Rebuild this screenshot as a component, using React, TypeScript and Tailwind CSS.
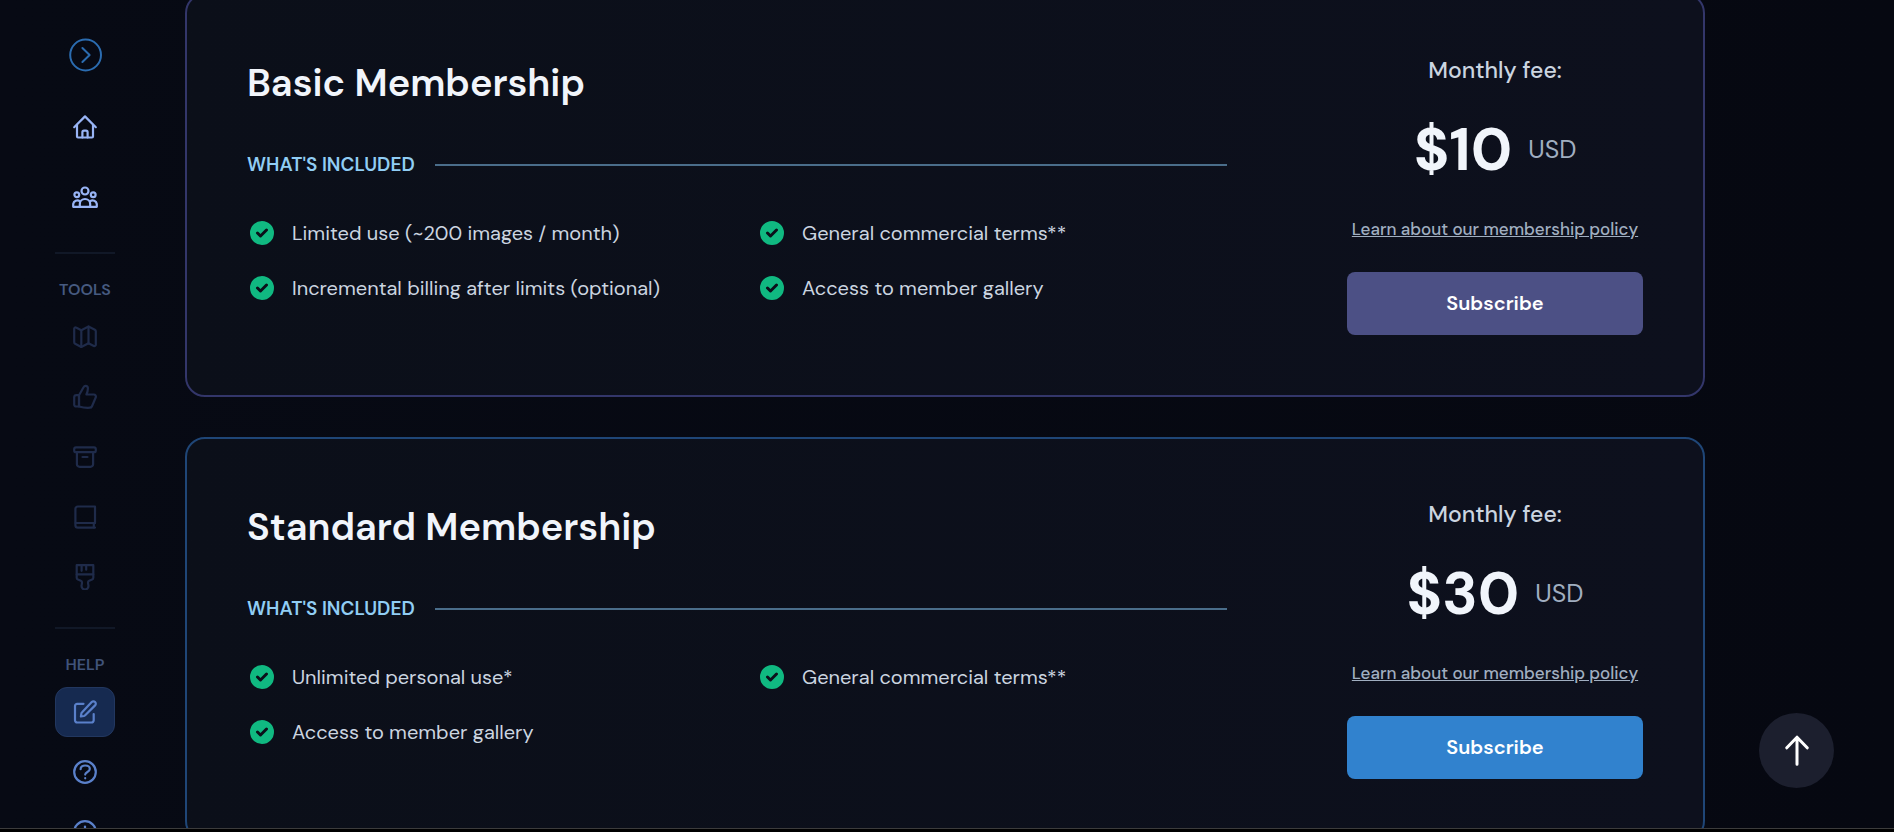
import type { ReactNode } from "react";
import { HiCheckCircle } from "react-icons/hi";

function Icon({ children }: { children: ReactNode }) {
  return (
    <svg
      width="26"
      height="26"
      viewBox="0 0 26 26"
      fill="none"
      stroke="currentColor"
      strokeWidth="2.2"
      strokeLinecap="round"
      strokeLinejoin="round"
      aria-hidden="true"
    >
      {children}
    </svg>
  );
}

const HomeIcon = () => (
  <Icon>
    <path d="M2.2 13.2 13 2.4l10.8 10.8" />
    <path d="M5 10.8v11.7a1 1 0 0 0 1 1h14a1 1 0 0 0 1-1V10.8" />
    <path d="M10.4 23.5v-5.3a1.6 1.6 0 0 1 1.6-1.6h2a1.6 1.6 0 0 1 1.6 1.6v5.3" />
  </Icon>
);

const UsersIcon = () => (
  <Icon>
    <circle cx="13" cy="7" r="3.5" />
    <circle cx="4.8" cy="10.7" r="2.4" />
    <circle cx="21.2" cy="10.7" r="2.4" />
    <path d="M7.8 22.8v-2.6a5.2 5.2 0 0 1 10.4 0v2.6" />
    <path d="M7.8 17.2A4.2 4.2 0 0 0 1.2 20v2.8h23.6V20a4.2 4.2 0 0 0-6.6-2.8" />
  </Icon>
);

const MapIcon = () => (
  <Icon>
    <path d="M9.3 6.2 4 3.6a1.2 1.2 0 0 0-1.8 1.1v13.6c0 .6.3 1.2.9 1.5l6.2 3.1 7.2-3.6 5.3 2.6a1.4 1.4 0 0 0 2-1.2V7.2c0-.6-.3-1.1-.9-1.4l-6.4-3.2z" />
    <path d="M9.3 6.2v16.7M16.5 2.6v16.7" />
  </Icon>
);

const ThumbIcon = () => (
  <Icon>
    <path d="M7 11.2 11.7 3c.4-.8 1-1.2 1.8-1.2 1.3 0 2.4 1 2.4 2.4 0 2.2-.4 4.2-1.5 6.3h7.4c1.5 0 2.5 1.4 2 2.8l-3.8 8.9c-.4.9-1.1 1.5-2.1 1.5-3.8.3-7.4-.2-10.9-1.2z" />
    <path d="M7 11.2v11.3H4a1.8 1.8 0 0 1-1.8-1.8v-7.2c0-1.3 1-2.3 2.3-2.3z" />
  </Icon>
);

const ArchiveIcon = () => (
  <Icon>
    <rect x="2.2" y="3.4" width="21.6" height="4.8" rx="1.8" />
    <path d="M4.9 8.4v11.8a2.6 2.6 0 0 0 2.6 2.6h11a2.6 2.6 0 0 0 2.6-2.6V8.4" />
    <path d="M10.5 13h5" />
  </Icon>
);

const BookIcon = () => (
  <Icon>
    <path d="M23 19V2.5H5.7a2.3 2.3 0 0 0-2.3 2.3v16.4a2.4 2.4 0 0 0 2.4 2.4H23" />
    <path d="M3.6 19H23M21.8 19v4.4" />
  </Icon>
);

const BrushIcon = () => (
  <Icon>
    <path d="M4.7 1.2h16.6v12.6a2 2 0 0 1-1.2 1.8l-2.9 1.2a2 2 0 0 0-1.2 2c0 1.2.5 2 .5 3.2a3.5 3.5 0 0 1-7 0c0-1.2.5-2 .5-3.2a2 2 0 0 0-1.2-2l-2.9-1.2a2 2 0 0 1-1.2-1.8z" />
    <path d="M4.7 10.4h16.6M9.6 1.5v5.3M14.2 1.5v4.2" />
  </Icon>
);

const EditIcon = () => (
  <Icon>
    <path d="M11.5 4.8H5.2A2.2 2.2 0 0 0 3 7v14.3a2.2 2.2 0 0 0 2.2 2.2h14.3a2.2 2.2 0 0 0 2.2-2.2V15" />
    <path d="M19.7 3a2.4 2.4 0 0 1 3.4 3.4L13.2 16.3a2.6 2.6 0 0 1-1.2.7l-3.1.5.5-3.1c.1-.5.4-.9.7-1.2z" />
  </Icon>
);

const HelpIcon = () => (
  <Icon>
    <circle cx="13" cy="13" r="10.8" />
    <path d="M8.6 10.2c0-2.4 2-3.7 4.6-3.7 2.7 0 4.6 1.3 4.6 3.5 0 3-4.6 2.9-4.6 5.6" />
    <path d="M13.2 19.2v.1" />
  </Icon>
);

const InfoIcon = () => (
  <Icon>
    <circle cx="13" cy="13" r="10.8" />
    <path d="M13 7.5v11" />
  </Icon>
);

type NavItem = { label: string; icon: ReactNode };

const tools: NavItem[] = [
  { label: "Explore", icon: <MapIcon /> },
  { label: "Rate", icon: <ThumbIcon /> },
  { label: "Archive", icon: <ArchiveIcon /> },
  { label: "Library", icon: <BookIcon /> },
  { label: "Styles", icon: <BrushIcon /> },
];

function NavLink({ item, tone }: { item: NavItem; tone: string }) {
  return (
    <a
      href="#"
      aria-label={item.label}
      className={`flex h-[50px] w-[60px] shrink-0 items-center justify-center rounded-xl border ${tone}`}
    >
      {item.icon}
    </a>
  );
}

function Sidebar() {
  return (
    <aside className="flex w-[170px] shrink-0 flex-col items-center overflow-hidden pt-[38px]">
      <button type="button" aria-label="Expand menu" className="shrink-0 text-[#2b6cb0]">
        <svg width="34" height="34" viewBox="0 0 34 34" fill="none" stroke="currentColor" strokeWidth="2" strokeLinecap="round" strokeLinejoin="round">
          <circle cx="17.6" cy="17" r="15.4" />
          <path d="M14.4 10l7.2 7-7.2 7" />
        </svg>
      </button>
      <nav className="mt-[30px] flex flex-col items-center gap-5">
        <NavLink item={{ label: "Home", icon: <HomeIcon /> }} tone="border-transparent text-[#98b4f5]" />
        <NavLink item={{ label: "Community", icon: <UsersIcon /> }} tone="border-transparent text-[#98b4f5]" />
      </nav>
      <div className="mt-[30px] h-0.5 w-[60px] shrink-0 bg-[#111827]" />
      <h3 className="mt-[26px] text-[16px] leading-5 font-semibold text-[#465a80]">TOOLS</h3>
      <nav className="mt-3 flex flex-col items-center gap-2.5">
        {tools.map((item) => (
          <NavLink key={item.label} item={item} tone="border-transparent text-[#1f2b4a]" />
        ))}
      </nav>
      <div className="mt-[25px] h-0.5 w-[60px] shrink-0 bg-[#111827]" />
      <h3 className="mt-[26px] text-[16px] leading-5 font-semibold text-[#40537a]">HELP</h3>
      <nav className="mt-3 flex flex-col items-center gap-2.5">
        <NavLink item={{ label: "Feedback", icon: <EditIcon /> }} tone="border-[#22375f] bg-[#162a50] text-[#5a80ca]" />
        <NavLink item={{ label: "Help", icon: <HelpIcon /> }} tone="border-transparent text-[#5a80ca]" />
        <NavLink item={{ label: "Updates", icon: <InfoIcon /> }} tone="border-transparent text-[#5a80ca]" />
      </nav>
    </aside>
  );
}

type Plan = {
  name: string;
  price: string;
  features: string[];
  border: string;
  button: string;
};

const plans: Plan[] = [
  {
    name: "Basic Membership",
    price: "$10",
    features: [
      "Limited use (~200 images / month)",
      "General commercial terms**",
      "Incremental billing after limits (optional)",
      "Access to member gallery",
    ],
    border: "border-[#33366a]",
    button: "bg-[#4c5085]",
  },
  {
    name: "Standard Membership",
    price: "$30",
    features: ["Unlimited personal use*", "General commercial terms**", "Access to member gallery"],
    border: "border-[#1f4677]",
    button: "bg-[#3182ce]",
  },
];

function PlanCard({ plan }: { plan: Plan }) {
  return (
    <section
      className={`flex shrink-0 gap-[120px] rounded-[20px] border-2 bg-linear-to-r from-[#0b0f19] to-[#0d101d] p-[60px] ${plan.border}`}
    >
      <div className="min-w-0 flex-1">
        <h2 className="text-[38px] leading-[56px] font-semibold text-[#f1f5fb]">{plan.name}</h2>
        <div className="mt-10 flex items-center gap-5">
          <h3 className="text-[19px] leading-7 font-semibold text-[#90cdf4]">WHAT'S INCLUDED</h3>
          <div className="h-0.5 flex-1 bg-[#4a6d8a]" />
        </div>
        <ul className="mt-10 grid grid-cols-2 gap-x-10 gap-y-[27px]">
          {plan.features.map((feature) => (
            <li key={feature} className="flex items-center gap-[15px] text-[20px] leading-7 text-[#cbd5e0]">
              <HiCheckCircle className="-my-px size-[30px] shrink-0 text-[#10b981]" />
              {feature}
            </li>
          ))}
        </ul>
      </div>
      <div className="flex w-[296px] shrink-0 flex-col items-center">
        <p className="text-[23px] leading-[30px] font-medium text-[#cbd5e0]">Monthly fee:</p>
        <p className="mt-[35px] flex items-center gap-4 text-[59px] leading-[60px] font-bold text-[#f1f5fb]">
          {plan.price}
          <span className="text-[25px] font-normal text-[#a0aec0]">USD</span>
        </p>
        <a href="#" className="mt-[35px] text-[17px] leading-7 font-medium whitespace-nowrap text-[#a0aec0] underline">
          Learn about our membership policy
        </a>
        <button
          type="button"
          className={`mt-[29px] h-[63px] w-full rounded-lg pb-0.5 text-[20px] font-semibold text-white ${plan.button}`}
        >
          Subscribe
        </button>
      </div>
    </section>
  );
}

export default function App() {
  return (
    <div className="flex h-screen flex-col bg-black font-['DM_Sans','Inter',sans-serif]">
      <div className="relative flex min-h-0 flex-1 overflow-hidden border-b border-[#3c3c3c] bg-linear-to-r from-[#070a14] to-[#060811]">
        <Sidebar />
        <main className="-mt-[7px] flex min-w-0 flex-1 flex-col gap-10 pr-[189px] pl-[15px]">
          {plans.map((plan) => (
            <PlanCard key={plan.name} plan={plan} />
          ))}
        </main>
        <button
          type="button"
          aria-label="Back to top"
          className="absolute right-[60px] bottom-10 flex size-[75px] items-center justify-center rounded-full bg-[#1c1f2e] text-white"
        >
          <svg width="32" height="32" viewBox="0 0 32 32" fill="none" stroke="currentColor" strokeWidth="3" strokeLinecap="round" strokeLinejoin="round">
            <path d="M16 29.2V2.2M5.8 12.8 16 2.2l10.2 10.6" />
          </svg>
        </button>
      </div>
      <div className="h-[3px] shrink-0" />
    </div>
  );
}
